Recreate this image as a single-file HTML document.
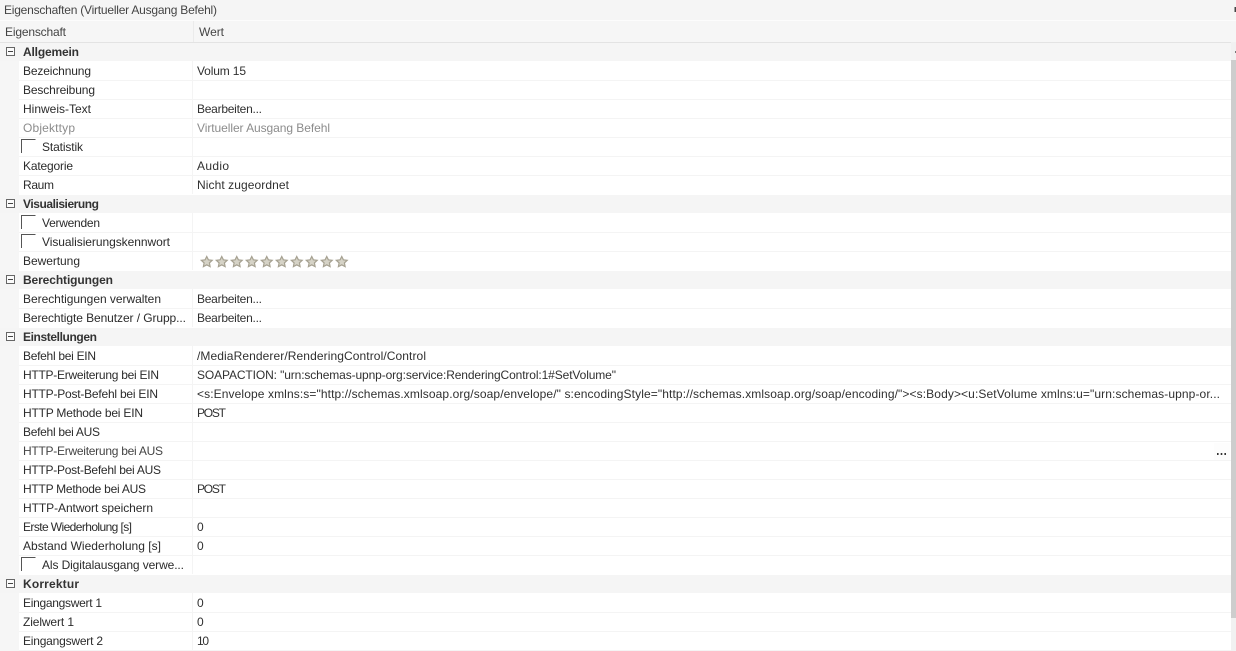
<!DOCTYPE html>
<html><head><meta charset="utf-8"><style>
html,body{margin:0;padding:0;width:1236px;height:651px;overflow:hidden;background:#fff}
svg{display:block}
text{font-family:"Liberation Sans",sans-serif;font-size:12px;fill:#2b2b2b}
.b{font-weight:bold;fill:#333}
.g{fill:#8c8c8c}
.h{fill:#444}
.v{fill:#303030}
</style></head><body>
<svg width="1236" height="651" viewBox="0 0 1236 651" xmlns="http://www.w3.org/2000/svg">
<defs>
<g id="ex"><rect x="6.5" y="-4.5" width="8" height="8" fill="#fbfbfb" stroke="#666"/><path d="M8 -.5H13" stroke="#444"/></g>
<path id="ck" d="M21.5 14V.5H35.5" fill="none" stroke="#555"/>
<path id="st" d="M5.75 .5L7.4 3.8L11.2 4.3L8.4 6.9L9.1 10.6L5.75 8.8L2.4 10.6L3.1 6.9L.3 4.3L4.1 3.8Z" fill="#d6d3c7" stroke="#a6a191" stroke-width="1.2"/>
</defs>
<rect width="1236" height="651" fill="#fff"/>
<rect width="1236" height="20" fill="#f5f5f5"/>
<rect y="20" width="1236" height="1" fill="#fcfcfc"/>
<rect y="21" width="1236" height="21" fill="#f6f6f6"/>
<rect y="42" width="1231" height="1" fill="#e3e3e3"/>
<rect x="193" y="21" width="1" height="21" fill="#ebebeb"/>
<rect y="43" width="19" height="608" fill="#f6f6f6"/>
<g fill="#f5f5f5">
<rect y="43" width="1231" height="18"/>
<rect y="195" width="1231" height="18"/>
<rect y="271" width="1231" height="18"/>
<rect y="328" width="1231" height="18"/>
<rect y="575" width="1231" height="18"/>
</g>
<g fill="#f4f4f4">
<rect x="19" y="80" width="1212" height="1"/><rect x="19" y="99" width="1212" height="1"/><rect x="19" y="118" width="1212" height="1"/><rect x="19" y="137" width="1212" height="1"/><rect x="19" y="156" width="1212" height="1"/><rect x="19" y="175" width="1212" height="1"/>
<rect x="19" y="232" width="1212" height="1"/><rect x="19" y="251" width="1212" height="1"/>
<rect x="19" y="308" width="1212" height="1"/>
<rect x="19" y="365" width="1212" height="1"/><rect x="19" y="384" width="1212" height="1"/><rect x="19" y="403" width="1212" height="1"/><rect x="19" y="422" width="1212" height="1"/><rect x="19" y="441" width="1212" height="1"/><rect x="19" y="460" width="1212" height="1"/><rect x="19" y="479" width="1212" height="1"/><rect x="19" y="498" width="1212" height="1"/><rect x="19" y="517" width="1212" height="1"/><rect x="19" y="536" width="1212" height="1"/><rect x="19" y="555" width="1212" height="1"/>
<rect x="19" y="612" width="1212" height="1"/><rect x="19" y="631" width="1212" height="1"/><rect x="19" y="650" width="1212" height="1"/>
<rect x="192" y="61" width="1" height="133"/><rect x="192" y="213" width="1" height="57"/><rect x="192" y="289" width="1" height="38"/><rect x="192" y="346" width="1" height="228"/><rect x="192" y="593" width="1" height="58"/>
</g>
<rect x="1231" y="42" width="5" height="609" fill="#f1f1f1"/>
<rect x="1231" y="60" width="5" height="558" fill="#cdcdcd"/>
<rect x="1235" y="51" width="1" height="2" fill="#777"/>
<rect x="1234.5" y="7" width="1.5" height="5" fill="#444"/>
<rect x="1214" y="443" width="16" height="17" fill="#fdfdfd"/>
<rect x="1217" y="453" width="1.6" height="2" fill="#333"/><rect x="1220.7" y="453" width="1.6" height="2" fill="#333"/><rect x="1224.4" y="453" width="1.6" height="2" fill="#333"/>

<use href="#ex" y="52"/><use href="#ex" y="204"/><use href="#ex" y="280"/><use href="#ex" y="337"/><use href="#ex" y="584"/>
<use href="#ck" y="139"/><use href="#ck" y="215"/><use href="#ck" y="234"/><use href="#ck" y="557"/>
<use href="#st" x="201" y="256"/><use href="#st" x="216" y="256"/><use href="#st" x="231" y="256"/><use href="#st" x="246" y="256"/><use href="#st" x="261" y="256"/><use href="#st" x="276" y="256"/><use href="#st" x="291" y="256"/><use href="#st" x="306" y="256"/><use href="#st" x="321" y="256"/><use href="#st" x="336" y="256"/>

<text x="4" y="14" textLength="213" class="h">Eigenschaften (Virtueller Ausgang Befehl)</text>
<text x="5" y="36" textLength="61" class="h">Eigenschaft</text>
<text x="199" y="36" textLength="25" class="h">Wert</text>

<text x="23" y="56" textLength="56" class="b">Allgemein</text>
<text x="23" y="75" textLength="68">Bezeichnung</text>
<text x="23" y="94" textLength="72">Beschreibung</text>
<text x="23" y="113" textLength="68">Hinweis-Text</text>
<text x="23" y="132" textLength="52" class="g">Objekttyp</text>
<text x="42" y="151" textLength="41">Statistik</text>
<text x="23" y="170" textLength="50">Kategorie</text>
<text x="23" y="189" textLength="31">Raum</text>
<text x="23" y="208" textLength="76" class="b">Visualisierung</text>
<text x="42" y="227" textLength="58">Verwenden</text>
<text x="42" y="246" textLength="128">Visualisierungskennwort</text>
<text x="23" y="265" textLength="57">Bewertung</text>
<text x="23" y="284" textLength="90" class="b">Berechtigungen</text>
<text x="23" y="303" textLength="138">Berechtigungen verwalten</text>
<text x="23" y="322" textLength="163">Berechtigte Benutzer / Grupp...</text>
<text x="23" y="341" textLength="74" class="b">Einstellungen</text>
<text x="23" y="360" textLength="73">Befehl bei EIN</text>
<text x="23" y="379" textLength="136">HTTP-Erweiterung bei EIN</text>
<text x="23" y="398" textLength="135">HTTP-Post-Befehl bei EIN</text>
<text x="23" y="417" textLength="120">HTTP Methode bei EIN</text>
<text x="23" y="436" textLength="77">Befehl bei AUS</text>
<text x="23" y="455" textLength="140" class="h">HTTP-Erweiterung bei AUS</text>
<text x="23" y="474" textLength="138">HTTP-Post-Befehl bei AUS</text>
<text x="23" y="493" textLength="123">HTTP Methode bei AUS</text>
<text x="23" y="512" textLength="130">HTTP-Antwort speichern</text>
<text x="23" y="531" textLength="109">Erste Wiederholung [s]</text>
<text x="23" y="550" textLength="138">Abstand Wiederholung [s]</text>
<text x="42" y="569" textLength="142">Als Digitalausgang verwe...</text>
<text x="23" y="588" textLength="56" class="b">Korrektur</text>
<text x="23" y="607" textLength="79">Eingangswert 1</text>
<text x="23" y="626" textLength="51">Zielwert 1</text>
<text x="23" y="645" textLength="80">Eingangswert 2</text>

<text x="197" y="75" textLength="49" class="v">Volum 15</text>
<text x="197" y="113" textLength="65" class="v">Bearbeiten...</text>
<text x="197" y="132" textLength="133" class="g">Virtueller Ausgang Befehl</text>
<text x="197" y="170" textLength="32" class="v">Audio</text>
<text x="197" y="189" textLength="92" class="v">Nicht zugeordnet</text>
<text x="197" y="303" textLength="65" class="v">Bearbeiten...</text>
<text x="197" y="322" textLength="65" class="v">Bearbeiten...</text>
<text x="197" y="360" textLength="229" class="v">/MediaRenderer/RenderingControl/Control</text>
<text x="197" y="379" textLength="419" class="v">SOAPACTION: "urn:schemas-upnp-org:service:RenderingControl:1#SetVolume"</text>
<text x="197" y="398" textLength="1023" class="v">&lt;s:Envelope xmlns:s="http://schemas.xmlsoap.org/soap/envelope/" s:encodingStyle="http://schemas.xmlsoap.org/soap/encoding/"&gt;&lt;s:Body&gt;&lt;u:SetVolume xmlns:u="urn:schemas-upnp-or...</text>
<text x="197" y="417" textLength="29" class="v">POST</text>
<text x="197" y="493" textLength="29" class="v">POST</text>
<text x="197" y="531" class="v">0</text>
<text x="197" y="550" class="v">0</text>
<text x="197" y="607" class="v">0</text>
<text x="197" y="626" class="v">0</text>
<text x="197" y="645" textLength="12" class="v">10</text>
</svg>
</body></html>
